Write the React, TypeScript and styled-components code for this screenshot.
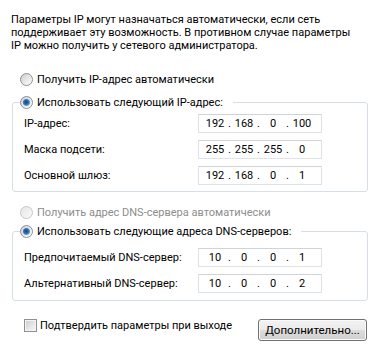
import styled, { createGlobalStyle } from 'styled-components';

const GlobalStyle = createGlobalStyle`
  html, body {
    margin: 0;
    padding: 0;
    background: #ffffff;
  }
  body {
    font-family: Roboto, 'Liberation Sans', sans-serif;
    font-size: 11px;
    color: #000000;
  }
`;

const Page = styled.div`
  width: 378px;
  height: 354px;
  box-sizing: border-box;
  padding: 13px 10px 0 11px;
  display: flex;
  flex-direction: column;
`;

const Intro = styled.p`
  margin: 0;
  line-height: 13px;
  white-space: nowrap;
`;

const RadioRow = styled.label<{ disabled?: boolean; offset?: number }>`
  display: flex;
  align-items: center;
  gap: 4px;
  height: 16px;
  margin-top: ${(p) => p.offset ?? 0}px;
  padding-left: 9px;
  white-space: nowrap;
  color: ${(p) => (p.disabled ? '#8d8d8d' : '#000000')};
`;

const Group = styled.fieldset<{ offset: number; top: number; bottom: number }>`
  margin: ${(p) => p.offset}px 0 0 1px;
  padding: ${(p) => p.top}px 0 ${(p) => p.bottom}px 11px;
  border: 1px solid #d5dfe5;
  border-radius: 3px;
  min-width: 0;
`;

const Legend = styled.legend`
  margin-left: -4px;
  padding: 0 10px 0 0;
  display: flex;
  align-items: center;
  gap: 4px;
  height: 16px;
  white-space: nowrap;
`;

const Rows = styled.div<{ gap: number }>`
  display: flex;
  flex-direction: column;
  gap: ${(p) => p.gap}px;
`;

const Row = styled.div`
  display: flex;
  align-items: center;
  height: 19px;
`;

const RowLabel = styled.span`
  width: 174px;
  white-space: nowrap;
`;

const IpBox = styled.div`
  display: flex;
  align-items: center;
  width: 124px;
  height: 19px;
  box-sizing: border-box;
  padding-left: 5px;
  border: 1px solid #dfe3e8;
  border-top-color: #cfd4da;
  background: #ffffff;
`;

const Octet = styled.span`
  width: 22px;
  text-align: center;
`;

const Dot = styled.span`
  width: 7px;
  text-align: center;
`;

const Footer = styled.div`
  display: flex;
  justify-content: space-between;
  align-items: flex-start;
  margin-top: 18px;
  padding: 0 1px 0 13px;
`;

const CheckRow = styled.label`
  display: flex;
  align-items: center;
  gap: 3px;
  height: 13px;
  white-space: nowrap;
`;

const CheckBox = styled.span`
  width: 13px;
  height: 13px;
  box-sizing: border-box;
  border: 1px solid #8e8f8f;
  background: linear-gradient(135deg, #c9ccd1 0%, #e4e6e8 55%, #f7f7f7 100%);
  box-shadow: inset 0 0 0 1px #f4f4f4;
`;

const Button = styled.button`
  width: 109px;
  height: 22px;
  padding: 0;
  border: 1px solid #707070;
  border-radius: 3px;
  background: linear-gradient(#f2f2f2 0%, #ebebeb 50%, #dddddd 51%, #cfcfcf 100%);
  box-shadow: inset 0 0 0 1px #fbfbfb;
  font-family: inherit;
  font-size: 11.5px;
  color: #000000;
`;

function Radio({ checked, disabled }: { checked?: boolean; disabled?: boolean }) {
  const fill = disabled ? 'rb-fill-off' : 'rb-fill';
  return (
    <svg width="13" height="13" viewBox="0 0 13 13">
      <defs>
        <linearGradient id="rb-fill" x1="0" y1="0" x2="1" y2="1">
          <stop offset="0" stopColor="#c6c9cd" />
          <stop offset="0.6" stopColor="#eceded" />
          <stop offset="1" stopColor="#fdfdfd" />
        </linearGradient>
        <linearGradient id="rb-fill-off" x1="0" y1="0" x2="1" y2="1">
          <stop offset="0" stopColor="#e6e6e6" />
          <stop offset="1" stopColor="#fafafa" />
        </linearGradient>
        <radialGradient id="rb-dot" cx="0.45" cy="0.45" r="0.6">
          <stop offset="0" stopColor="#1b3f6e" />
          <stop offset="0.55" stopColor="#2d6fb4" />
          <stop offset="1" stopColor="#7dc4f2" />
        </radialGradient>
      </defs>
      <circle
        cx="6.5"
        cy="6.5"
        r="6"
        fill={`url(#${fill})`}
        stroke={disabled ? '#c6c6c6' : '#8e9295'}
      />
      {checked && <circle cx="6.5" cy="6.5" r="3.6" fill="url(#rb-dot)" />}
    </svg>
  );
}

function IpField({ value }: { value: string[] }) {
  return (
    <IpBox>
      {value.map((part, i) => (
        <>
          {i > 0 && <Dot key={'d' + i}>.</Dot>}
          <Octet key={'o' + i}>{part}</Octet>
        </>
      ))}
    </IpBox>
  );
}

const ipRows = [
  { label: 'IP-адрес:', value: ['192', '168', '0', '100'] },
  { label: 'Маска подсети:', value: ['255', '255', '255', '0'] },
  { label: 'Основной шлюз:', value: ['192', '168', '0', '1'] },
];

const dnsRows = [
  { label: 'Предпочитаемый DNS-сервер:', value: ['10', '0', '0', '1'] },
  { label: 'Альтернативный DNS-сервер:', value: ['10', '0', '0', '2'] },
];

export default function App() {
  return (
    <>
      <GlobalStyle />
      <Page>
        <Intro>
          Параметры IP могут назначаться автоматически, если сеть
          <br />
          поддерживает эту возможность. В противном случае параметры
          <br />
          IP можно получить у сетевого администратора.
        </Intro>

        <RadioRow offset={19}>
          <Radio />
          Получить IP-адрес автоматически
        </RadioRow>

        <Group offset={7} top={4} bottom={6}>
          <Legend>
            <Radio checked />
            Использовать следующий IP-адрес:
          </Legend>
          <Rows gap={7}>
            {ipRows.map((row) => (
              <Row key={row.label}>
                <RowLabel>{row.label}</RowLabel>
                <IpField value={row.value} />
              </Row>
            ))}
          </Rows>
        </Group>

        <RadioRow offset={12} disabled>
          <Radio disabled />
          Получить адрес DNS-сервера автоматически
        </RadioRow>

        <Group offset={3} top={9} bottom={7}>
          <Legend>
            <Radio checked />
            Использовать следующие адреса DNS-серверов:
          </Legend>
          <Rows gap={7}>
            {dnsRows.map((row) => (
              <Row key={row.label}>
                <RowLabel>{row.label}</RowLabel>
                <IpField value={row.value} />
              </Row>
            ))}
          </Rows>
        </Group>

        <Footer>
          <CheckRow>
            <CheckBox />
            Подтвердить параметры при выходе
          </CheckRow>
          <Button>Дополнительно...</Button>
        </Footer>
      </Page>
    </>
  );
}
